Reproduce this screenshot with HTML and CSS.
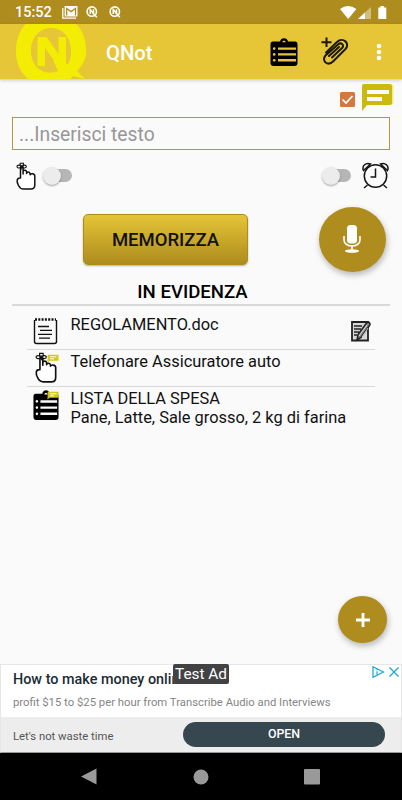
FILE: index.html
```html
<!DOCTYPE html>
<html lang="it">
<head>
<meta charset="utf-8">
<title>QNot</title>
<link rel="stylesheet" href="styles.css">
</head>
<body>
<svg class="defs">
	<symbol id="qicon" viewBox="0 0 12 12">
		<circle cx="5.8" cy="5.6" r="4.7" fill="none" stroke="#fff" stroke-width="1.6"/>
		<path d="M4.2 8V3.5L7.5 7.6V3.3M7 7l3.8 4.2" fill="none" stroke="#fff" stroke-width="1.5"/>
	</symbol>
	<symbol id="finger" viewBox="0 0 20 28">
		<path d="M4.500 16V5.500c0-1.600 2.600-1.600 2.600 0V12V9.500c0-1.800 3.200-1.800 3.500 0v2c.3-2 3.200-1.800 3.500.3v1c.3-1.500 4.600-1.500 4.700 1.200v9c0 2.500-1.500 4-4 4H7.500c-3 0-4-1.500-5-3.500C.5 20 .3 15.500 4.500 16z" fill="#fff" stroke="#111" stroke-width="1.500" stroke-linejoin="round"/>
		<path d="M5.800 4.500v3M1 4.500C1 2.600 4 2.800 5.500 4.500 7 2.800 10.300 2.600 10.300 4.500S7 6.400 5.600 5.100C4 6.400 1 6.400 1 4.500zM4.200 1.200h3.200v2.500H4.200z" fill="none" stroke="#111" stroke-width="1.100"/>
	</symbol>
	<symbol id="clipboard" viewBox="0 0 28 28">
		<path d="M3 3.500h7c.5-4.500 7.500-4.500 8 0h7q2.500 0 2.500 2.500v19Q27.500 28 24.500 28h-21Q.5 28 .5 25V6Q.5 3.500 3 3.500z"/>
		<path class="tint" d="M12 4.200q2-3.200 4 0zM8 9.500h18v2.300H8zM8 15.300h18v2.300H8zM8 21.100h18v2.300H8z"/>
		<circle class="tint" cx="4.200" cy="10.600" r="1.300"/><circle class="tint" cx="4.200" cy="16.400" r="1.300"/><circle class="tint" cx="4.200" cy="22.200" r="1.300"/>
	</symbol>
	<symbol id="note" viewBox="0 0 12 9">
		<path d="M.7.7H11.500V6.800H2.500L.5 8.500z" fill="#d3c816"/>
		<path d="M3 2.800h6.500M3 4.800h4" stroke="#fff" stroke-width="1"/>
	</symbol>
</svg>

<div class="status">
	<span class="time">15:52</span>
	<svg class="gmail" width="16" height="13" viewBox="0 0 16 13"><path d="M.8 2v10.200H14" fill="none" stroke="#fff" stroke-width="1.300"/><path d="M2.600 0h12.900v10.500H2.600z" fill="#fff"/><path d="M4.700 9.500V2.500L9 5.600l4.500-3.100v7" fill="none" stroke="#ae8c1d" stroke-width="1.300"/></svg>
	<svg class="q1" width="12" height="12"><use href="#qicon"/></svg>
	<svg class="q2" width="12" height="12"><use href="#qicon"/></svg>
	<svg class="signal" width="48" height="14" viewBox="0 0 48 14"><path d="M0 3q8.200-6 16.400 0L8.200 13z" fill="#fff"/><path d="M31 1v12H18z" fill="#d0bd80"/><path d="M25 6.600V13h-7z" fill="#fff"/><path d="M40.500 0h3.500v1.500h2.300V13h-8V1.500h2.200z" fill="#fff"/></svg>
</div>

<div class="bar">
	<svg class="logo" width="90" height="55" viewBox="0 24 90 55">
		<path fill="#f3ed03" fill-rule="evenodd" d="M51 15C28 13 16 31 16 51c0 13 5 22 13 29 11 6 37 6 44-4l12 3-8-8c5-5 9-11 9-20C86 30 74 15 51 15zM51 28c12 0 20 10 20 23 0 5-1 10-3 13L53 60l5 11c-15 6-27-5-27-20 0-13 8-23 20-23z"/>
		<path fill="#f3ed03" d="M37.500 37h9l12 17V37h7.500v28l-3 4-5-3-13-18v18h-7.500z"/>
	</svg>
	<span class="title">QNot</span>
	<svg class="clip" width="28" height="28"><use href="#clipboard"/></svg>
	<svg class="attach" width="28" height="28" viewBox="0 0 28 28" fill="none" stroke="#1d1803" stroke-width="2"><path d="M.5 5.200h10M5.500.5V10"/><path stroke-linecap="round" d="M5 15.500L16 5C22-.5 29.500 6.500 24.500 12L12 24.500C7 29.500 0 24 4.500 18.500L17 7.500c3.500-3 6.500 1 4 3.500L11 20.500M8 19L18 10"/></svg>
	<svg class="dots" width="6" height="18" fill="#fff"><circle cx="3" cy="3" r="2.300"/><circle cx="3" cy="9" r="2.300"/><circle cx="3" cy="15" r="2.300"/></svg>
</div>

<div class="content">
	<div class="options">
		<svg class="check" width="15" height="15" viewBox="0 0 15 15"><rect width="15" height="15" rx="1.500" fill="#d57840"/><path d="M2.500 7.500L6 11l6.500-7" fill="none" stroke="#fff" stroke-width="1.700"/></svg>
		<svg class="comment" width="33" height="29" viewBox="0 0 33 29"><path d="M30 2h2.500v19H29z" fill="#f2e98a"/><path d="M1 3Q1 1 3 1H29q2 0 2 2v17q0 2-2 2H6L1 28z" fill="#cbb90f"/><path d="M6 7h22v4H6zM6 14h15v4H6z" fill="#fafafa"/></svg>
	</div>
	<input class="field" type="text" placeholder="...Inserisci testo">
	<div class="switches">
		<svg width="20" height="28" class="hand"><use href="#finger"/></svg>
		<span class="switch"></span>
		<span class="switch right"></span>
		<svg class="alarm" width="27" height="27" viewBox="0 0 27 27" fill="none" stroke="#151515" stroke-width="1.500"><circle cx="13.500" cy="14" r="11.200"/><path d="M13.500 6.500V15H8.500M5.500 23L2 26M21.500 23l3.500 3M1.500 8.500C-.5 4 4 0 8.500 2zM25.500 8.500C27.500 4 23 0 18.500 2z"/></svg>
	</div>
	<div class="actions">
		<button class="save">MEMORIZZA</button>
		<button class="round mic"><svg width="18" height="28" viewBox="0 0 18 28"><rect x="4" width="10" height="18.500" rx="3.500" fill="#fff"/><path d="M1 11v4c0 8 16 8 16 0v-4M9 20v5" fill="none" stroke="#fff" stroke-width="1.600"/><ellipse cx="9" cy="26" rx="7" ry="1.800" fill="#fff"/></svg></button>
	</div>
	<h2>IN EVIDENZA</h2>
	<div class="list">
		<div class="row first">
			<svg class="icon" width="28" height="28" viewBox="0 0 28 28"><path d="M3.500 3v21.500q0 2 2 2h18q2 0 2-2V3" fill="none" stroke="#111" stroke-width="1.400"/><path d="M4 2.500h21" stroke="#111" stroke-width="2.400" stroke-dasharray="2 1.300"/><path d="M7 9.500h11M9 13.400h12M7 17.300h14M8 21.200h11" stroke="#111" stroke-width="1.300"/></svg>
			<span class="label">REGOLAMENTO.doc</span>
			<svg class="edit" width="20" height="21" viewBox="0 0 20 21"><path d="M1 1h16v18.500H1z" fill="#d8d8d8" stroke="#222" stroke-width="1.800"/><path d="M3 5h8M3 8h7M3 11h5M3 14h3" stroke="#222" stroke-width="1.500"/><path d="M6 19l1-5.500L15.500 2c2-2 4.500 0 3 2.500L10 16.500z" fill="#888" stroke="#222" stroke-width="1.500"/><path d="M8 15l8-11M11 16l6-9" stroke="#eee" stroke-width=".8"/></svg>
		</div>
		<div class="row second">
			<svg class="icon" width="28" height="31" viewBox="0 0 28 31"><svg x="4" y="0" width="22" height="31"><use href="#finger"/></svg><svg x="16" y="2" width="12" height="9"><use href="#note"/></svg></svg>
			<span class="label">Telefonare Assicuratore auto</span>
		</div>
		<div class="row third">
			<svg class="icon" width="28" height="31" viewBox="0 0 28 31"><svg x="2" y="1" width="26" height="30" viewBox="0 0 28 28" preserveAspectRatio="none"><use href="#clipboard" width="28" height="28"/></svg><svg x="16" y="2" width="12" height="9"><use href="#note"/></svg></svg>
			<span class="label">LISTA DELLA SPESA<br><span class="items">Pane, Latte, Sale grosso, 2 kg di farina</span></span>
		</div>
	</div>
	<button class="round add"><svg width="14" height="14" stroke="#fff" stroke-width="2.800"><path d="M0 7h14M7 0v14"/></svg></button>
</div>

<div class="ad">
	<div class="adtop">
		<div class="headline">How to make money online</div>
		<div class="text">profit $15 to $25 per hour from Transcribe Audio and Interviews</div>
	</div>
	<div class="adbottom">
		<span class="advertiser">Let's not waste time</span>
		<span class="open">OPEN</span>
	</div>
	<span class="test">Test Ad</span>
	<svg class="choices" width="27" height="12" viewBox="0 0 27 12" fill="none" stroke="#16a8cf" stroke-width="1.200"><path d="M1 .7l10.500 5.300L1 11.300zM5 5.300V8.500M5 3v1.300M17.500 1.500l9 9M26.500 1.500l-9 9"/></svg>
</div>

<div class="nav">
	<svg width="16" height="17"><path d="M15.500.5v16L0 8.500z" fill="#999"/></svg>
	<svg width="16" height="16"><circle cx="8" cy="8" r="7.500" fill="#999"/></svg>
	<svg width="16" height="16"><rect width="16" height="15.500" rx="1" fill="#999"/></svg>
</div>
</body>
</html>
```
FILE: styles.css
```css
body{
	margin:0;
	width:402px;
	height:800px;
	overflow:hidden;
	display:flex;
	flex-direction:column;
	background-color:#fafafa;
	font-family:Roboto, sans-serif;
	color:#111;
}
*{
	box-sizing:border-box;
}
svg{
	display:block;
	flex:none;
}
.defs{
	width:0;
	height:0;
	position:absolute;
}
.status{
	height:24px;
	flex:none;
	display:flex;
	align-items:center;
	padding:1px 15px 0;
	background-color:#ae8c1d;
	color:#fff;
}
.time{
	width:47px;
	font-size:14.500px;
	font-weight:500;
}
.gmail{
	margin-top:-1px;
}
.q1{
	margin:-1px 0 0 8px;
}
.q2{
	margin:-1px 0 0 11px;
}
.signal{
	margin-left:auto;
	margin-right:-1px;
}
.bar{
	height:56px;
	flex:none;
	display:flex;
	align-items:center;
	background-color:#e6c637;
	border-bottom:1px solid #eadb94;
	box-shadow:0 1px 3px rgba(0,0,0,.15);
}
.title{
	width:164px;
	padding:2px 0 0 16px;
	font-size:20.300px;
	font-weight:500;
	color:#fff;
}
.clip{
	margin-left:16px;
	--tint:#e6c637;
}
.tint{
	fill:var(--tint, #fafafa);
}
.attach{
	margin:-1px 0 0 23px;
}
.dots{
	margin-left:27px;
}
.content{
	height:584px;
	flex:none;
	display:flex;
	flex-direction:column;
	padding:0 12px;
}
.options{
	height:37px;
	display:flex;
	justify-content:flex-end;
	padding-top:3px;
	margin-right:-4px;
	gap:6px;
}
.check{
	margin-top:9px;
}
.field{
	height:33px;
	width:378px;
	border:1px solid #b5944a;
	background:none;
	padding:2px 6px 0;
	font-family:Roboto, sans-serif;
	font-size:19.300px;
	outline:none;
}
.field::placeholder{
	color:#979797;
}
.switches{
	height:51px;
	display:flex;
	align-items:center;
	padding-left:4px;
}
.hand{
	margin-right:8px;
}
.switch{
	width:27px;
	height:13px;
	margin-left:1px;
	border-radius:7px;
	background-color:#b6b6b6;
}
.switch::before{
	content:"";
	display:block;
	width:18px;
	height:18px;
	margin:-2px 0 0 -2px;
	border-radius:50%;
	background-color:#ececec;
	box-shadow:0 1px 2px rgba(0,0,0,.35);
}
.right{
	margin-left:auto;
	margin-right:11px;
}
.alarm{
	margin-right:1px;
}
.actions{
	height:77px;
	display:flex;
	align-items:center;
	padding-left:71px;
}
.save{
	width:165px;
	height:51px;
	border:1px solid #b08c14;
	border-radius:5px;
	background:linear-gradient(#e4c437, #ae8c1d);
	box-shadow:0 1px 2px rgba(0,0,0,.3);
	font-family:Roboto, sans-serif;
	font-size:18.500px;
	font-weight:500;
	color:#111;
	padding:0;
}
.round{
	display:flex;
	align-items:center;
	justify-content:center;
	border:0;
	padding:0;
	border-radius:50%;
	background-color:#ae8c1d;
	box-shadow:1px 3px 6px rgba(0,0,0,.28);
}
.mic{
	width:67px;
	height:65px;
	margin-left:71px;
}
.mic svg{
	margin:-1px 2px 0 0;
}
h2{
	height:28px;
	margin:0;
	padding-right:17px;
	border-bottom:2px solid #d9d9d9;
	font-size:18.600px;
	line-height:29px;
	font-weight:500;
	text-align:center;
	color:#000;
}
.list{
	padding:0 15px;
}
.row{
	display:flex;
	border-bottom:1px solid #d9d9d9;
	font-size:16.400px;
	line-height:19px;
	padding-left:4px;
}
.label{
	margin-left:11.500px;
}
.first{
	height:44px;
	padding-top:11px;
}
.first .label{
	margin-top:-2px;
}
.edit{
	margin:4px 4px 0 auto;
}
.second{
	height:37px;
	padding-top:2px;
}
.third{
	height:44px;
	border:0;
	padding-top:2px;
}
.add{
	width:49px;
	height:47px;
	margin-top:auto;
	margin-bottom:21px;
	margin-right:3px;
	align-self:flex-end;
}
.ad{
	height:89px;
	flex:none;
	position:relative;
	background-color:#fff;
	border:1px solid #e6e6e6;
	border-bottom-color:#999;
}
.adtop{
	height:52px;
	padding:5px 12px 0;
}
.headline{
	font-size:14.400px;
	line-height:20px;
	font-weight:500;
	color:#1c2b33;
}
.text{
	margin-top:5px;
	font-size:11.300px;
	line-height:16px;
	color:#858585;
}
.adbottom{
	height:35px;
	display:flex;
	align-items:center;
	justify-content:space-between;
	padding:0 16px 0 12px;
	background-color:#ededed;
}
.advertiser{
	padding-top:3px;
	font-size:11.300px;
	color:#555;
}
.open{
	width:202px;
	height:25px;
	border-radius:13px;
	background-color:#37474f;
	color:#fff;
	font-size:12.400px;
	line-height:24px;
	font-weight:500;
	text-align:center;
}
.test{
	position:absolute;
	left:172px;
	top:-1px;
	width:56px;
	height:20px;
	border-radius:2px;
	background-color:#424242;
	color:#fff;
	font-size:15.400px;
	line-height:21px;
	text-align:center;
}
.choices{
	position:absolute;
	right:2px;
	top:1px;
}
.nav{
	height:47px;
	flex:none;
	display:flex;
	align-items:center;
	padding:0 82px 0 81px;
	justify-content:space-between;
	background-color:#000;
}
```
